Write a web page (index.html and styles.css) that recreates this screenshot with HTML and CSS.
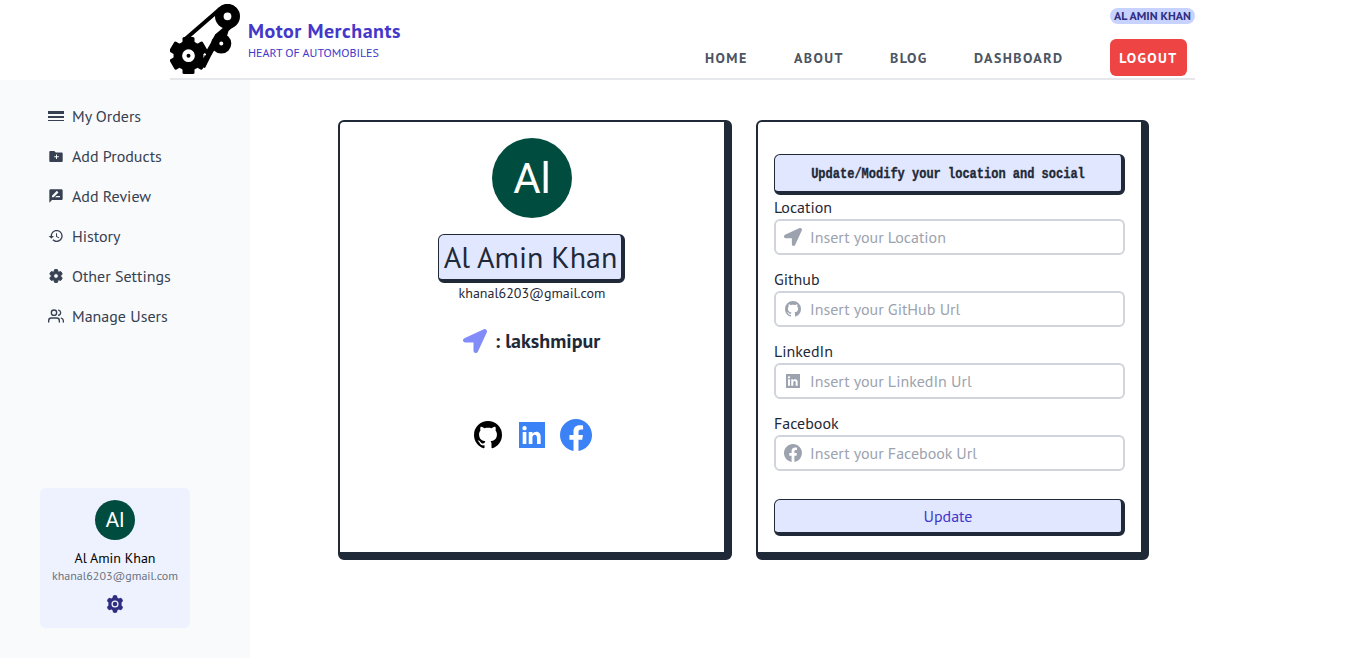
FILE: index.html
```html
<!DOCTYPE html>
<html lang="en">
<head>
<meta charset="utf-8">
<title>Motor Merchants</title>
<link rel="stylesheet" href="styles.css">
</head>
<body>
<svg class="defs" width="0" height="0">
  <symbol id="arrow" viewBox="0 0 512 512"><path d="M444.52 3.52L28.74 195.42c-47.97 22.39-31.98 92.75 19.19 92.75h175.91v175.91c0 51.17 70.36 67.17 92.75 19.19l191.9-415.78c15.99-38.39-25.59-79.97-63.97-63.97z"/></symbol>
  <symbol id="github" viewBox="2 2 20 20"><path d="M12 2A10 10 0 0 0 2 12c0 4.42 2.87 8.17 6.84 9.5.5.08.66-.23.66-.5v-1.69c-2.77.6-3.36-1.34-3.36-1.34-.46-1.16-1.11-1.47-1.11-1.47-.91-.62.07-.6.07-.6 1 .07 1.53 1.03 1.53 1.03.87 1.52 2.34 1.07 2.91.83.09-.65.35-1.09.63-1.34-2.22-.25-4.55-1.11-4.55-4.92 0-1.11.38-2 1.03-2.71-.1-.25-.45-1.29.1-2.64 0 0 .84-.27 2.75 1.02.79-.22 1.65-.33 2.5-.33.85 0 1.71.11 2.5.33 1.91-1.29 2.75-1.02 2.75-1.02.55 1.35.2 2.39.1 2.64.65.71 1.03 1.6 1.03 2.71 0 3.82-2.34 4.66-4.57 4.91.36.31.69.92.69 1.85V21c0 .27.16.59.67.5C19.14 20.16 22 16.42 22 12A10 10 0 0 0 12 2z"/></symbol>
  <symbol id="linkedin" viewBox="0 0 24 24"><path fill-rule="evenodd" d="M0 0h24v24H0zM3.4 9.2v11h3.4v-11zM5.1 3.7a2 2 0 1 0 0 4 2 2 0 0 0 0-4zM9 9.2v11h3.4v-5.8c0-3.3 4.2-3.5 4.2 0v5.8h3.4v-6.7c0-5.5-5.8-5.4-7.6-2.6V9.2z"/></symbol>
  <symbol id="facebook" viewBox="2 2 20 20"><path d="M12 2.04C6.5 2.04 2 6.53 2 12.06C2 17.06 5.66 21.21 10.44 21.96V14.96H7.9V12.06H10.44V9.85C10.44 7.34 11.93 5.96 14.22 5.96C15.31 5.96 16.45 6.15 16.45 6.15V8.62H15.19C13.95 8.62 13.56 9.39 13.56 10.18V12.06H16.34L15.89 14.96H13.56V21.96A10 10 0 0 0 22 12.06C22 6.53 17.5 2.04 12 2.04Z"/></symbol>
</svg>

<header class="header">
  <div class="brand">
    <svg class="logo" viewBox="0 0 70 70">
      <path d="M16 34.500L50 5" fill="none" stroke="#000" stroke-width="4"/>
      <path d="M42.500 37L45 30.500L54 23L69 17.500L58.500 27L57 32Z"/>
      <path d="M43 35L35 49L32 63L35 64L41 52L45 45Z"/>
      <circle cx="57.500" cy="12.300" r="8.200" fill="none" stroke="#000" stroke-width="8.600"/>
      <circle cx="51.300" cy="39.600" r="6" fill="none" stroke="#000" stroke-width="8"/>
      <circle cx="18.500" cy="51.700" r="15"/>
      <g>
        <rect x="12.500" y="33" width="12" height="37" rx="1.500"/>
        <rect x="12.500" y="32.500" width="12" height="38" rx="1.500" transform="rotate(60 18.500 51.700)"/>
        <rect x="12.500" y="32.500" width="12" height="38" rx="1.500" transform="rotate(-60 18.500 51.700)"/>
      </g>
      <circle cx="18.500" cy="51.700" r="4.200" stroke="#fff" stroke-width="4.400"/>
      <circle cx="35" cy="50.500" r="1.100" fill="#fff"/>
    </svg>
    <div class="brand-text">
      <div class="brand-name">Motor Merchants</div>
      <div class="brand-tag">HEART OF AUTOMOBILES</div>
    </div>
  </div>
  <nav class="nav">
    <a class="nav-home">HOME</a>
    <a class="nav-about">ABOUT</a>
    <a class="nav-blog">BLOG</a>
    <a class="nav-dashboard">DASHBOARD</a>
    <div class="account">
      <span class="user-badge">AL AMIN KHAN</span>
      <button class="logout">LOGOUT</button>
    </div>
  </nav>
</header>

<div class="body">
  <aside class="sidebar">
    <ul class="menu">
      <li><svg viewBox="0 0 16 16"><path d="M0 3h16v3H0zM0 8h16v2H0zM0 12h16v1H0z"/></svg><span>My Orders</span></li>
      <li><svg viewBox="0 0 16 16"><path fill-rule="evenodd" d="M1.300 4q0-1 1-1h4l1.500 1.400h5.900q1 0 1 1v7.600q0 1-1 1H2.300q-1 0-1-1zM8 6.500v1.700H6.200v1H8v1.700h1V9.200h1.800v-1H9V6.500z"/></svg><span>Add Products</span></li>
      <li><svg viewBox="0 0 24 24"><path d="M20 2H4c-1.100 0-2 .9-2 2v18l4-4h14c1.100 0 2-.9 2-2V4c0-1.100-.9-2-2-2zM6 14v-2.470l6.880-6.880c.2-.2.510-.2.710 0l1.770 1.770c.2.200.2.510 0 .710L8.470 14H6zm12 0h-7.500l2-2H18v2z"/></svg><span>Add Review</span></li>
      <li><svg viewBox="0 0 24 24"><path d="M13 3c-4.970 0-9 4.030-9 9H1l3.890 3.890.07.14L9 12H6c0-3.870 3.130-7 7-7s7 3.130 7 7-3.130 7-7 7c-1.930 0-3.680-.79-4.940-2.060l-1.420 1.420C8.270 19.990 10.510 21 13 21c4.970 0 9-4.030 9-9s-4.030-9-9-9zm-1 5v5l4.280 2.540.72-1.210-3.500-2.080V8H12z"/></svg><span>History</span></li>
      <li><svg viewBox="0 0 24 24"><path d="M19.140 12.940c.04-.3.060-.61.060-.94s-.02-.64-.07-.94l2.030-1.580c.18-.14.23-.41.12-.61l-1.920-3.320c-.12-.22-.37-.29-.59-.22l-2.390.96c-.5-.38-1.030-.7-1.620-.94l-.36-2.540c-.04-.24-.24-.41-.48-.41h-3.840c-.24 0-.43.17-.47.41l-.36 2.540c-.59.24-1.130.57-1.620.94l-2.390-.96c-.22-.08-.47 0-.59.22L2.740 8.870c-.12.21-.08.47.12.61l2.030 1.580c-.05.3-.09.63-.09.940s.02.64.07.94l-2.030 1.580c-.18.14-.23.41-.12.61l1.920 3.320c.12.22.37.29.59.22l2.390-.96c.5.38 1.030.7 1.620.94l.36 2.540c.05.24.24.41.48.41h3.840c.24 0 .44-.17.47-.41l.36-2.540c.59-.24 1.130-.56 1.620-.94l2.390.96c.22.080.47 0 .59-.22l1.920-3.320c.12-.22.070-.47-.12-.61l-2.010-1.580zM12 15.600A3.600 3.600 0 1 1 12 8.400a3.600 3.600 0 0 1 0 7.200z" stroke="#374151" stroke-width="1.500"/></svg><span>Other Settings</span></li>
      <li><svg class="line" viewBox="0 0 24 24"><path d="M17 21v-2a4 4 0 0 0-4-4H5a4 4 0 0 0-4 4v2M23 21v-2a4 4 0 0 0-3-3.870M16 3.130a4 4 0 0 1 0 7.750"/><circle cx="9" cy="7" r="4"/></svg><span>Manage Users</span></li>
    </ul>
    <div class="user-card">
      <div class="avatar avatar-small">Al</div>
      <div class="user-name">Al Amin Khan</div>
      <div class="user-mail">khanal6203@gmail.com</div>
      <svg class="user-gear" viewBox="0 0 18 18"><path d="M7 .8q2-1.400 4 0l.5 1.900 1.200.7 2-.6q2 .9 2.300 3.200L15.600 7.500v3l1.400 1.500q-.3 2.300-2.300 3.200l-2-.6-1.200.7-.5 1.900q-2 1.400-4 0l-.5-1.900-1.200-.7-2 .6Q1.300 14.300 1 12l1.400-1.500v-3L1 6q.3-2.300 2.300-3.200l2 .6 1.200-.7z"/><circle cx="9" cy="9" r="2.900" fill="none" stroke="#eef2ff" stroke-width="1.300"/></svg>
    </div>
  </aside>

  <main class="main">
    <section class="card profile">
      <div class="avatar avatar-large">Al</div>
      <h1 class="profile-name">Al Amin Khan</h1>
      <div class="profile-mail">khanal6203@gmail.com</div>
      <div class="place"><svg><use href="#arrow"/></svg><span>: lakshmipur</span></div>
      <div class="socials">
        <svg class="s-github"><use href="#github"/></svg>
        <svg class="s-linkedin"><use href="#linkedin"/></svg>
        <svg class="s-facebook"><use href="#facebook"/></svg>
      </div>
    </section>

    <form class="card form">
      <div class="form-title"><span>Update/Modify your location and social</span></div>
      <label>Location</label>
      <div class="field"><svg><use href="#arrow"/></svg><input placeholder="Insert your Location"></div>
      <label>Github</label>
      <div class="field"><svg class="sm"><use href="#github"/></svg><input placeholder="Insert your GitHub Url"></div>
      <label>LinkedIn</label>
      <div class="field"><svg class="xs"><use href="#linkedin"/></svg><input placeholder="Insert your LinkedIn Url"></div>
      <label>Facebook</label>
      <div class="field"><svg><use href="#facebook"/></svg><input placeholder="Insert your Facebook Url"></div>
      <button class="update" type="button">Update</button>
    </form>
  </main>
</div>
</body>
</html>
```
FILE: styles.css
```css
* { box-sizing: border-box; }
body {
  margin: 0;
  height: 658px;
  overflow: hidden;
  background: #fff;
  color: #1f2937;
  font-family: "PT Sans", "Noto Sans", sans-serif;
  font-size: 16px;
  line-height: 24px;
}
svg { display: block; flex: none; fill: currentColor; }
.defs { position: absolute; }
button, input { font: inherit; }

.header {
  display: flex;
  justify-content: space-between;
  width: 1025px;
  height: 80px;
  margin-left: 170px;
  border-bottom: 2px solid #e5e7eb;
}
.brand { display: flex; gap: 8px; padding-top: 4px; color: #4338ca; }
.logo { width: 70px; height: 70px; color: #000; }
.brand-text { padding-top: 13px; white-space: nowrap; }
.brand-name { font-size: 20px; font-weight: 700; line-height: 28px; letter-spacing: 0.5px; }
.brand-tag { font-size: 12px; line-height: 16px; }

.nav { display: flex; padding-top: 8px; font-size: 14px; font-weight: 700; color: #4b5563; white-space: nowrap; letter-spacing: 1.4px; }
.nav a { padding-top: 38px; }
.nav-home { width: 89px; }
.nav-about { width: 96px; }
.nav-blog { width: 84px; }
.nav-dashboard { width: 136px; }
.account { display: flex; flex-direction: column; align-items: flex-start; width: 85px; }
.user-badge {
  width: 85px;
  height: 16px;
  border-radius: 8px;
  background: #c7d2fe;
  color: #312e81;
  font-size: 12px;
  line-height: 16px;
  letter-spacing: 0;
  text-align: center;
}
.logout {
  width: 77px;
  height: 37px;
  margin-top: 15px;
  padding: 0;
  border: 0;
  border-radius: 6px;
  background: #ef4444;
  color: #fff;
  font-weight: 700;
  letter-spacing: 1.4px;
}

.body { display: flex; height: 578px; }
.sidebar {
  display: flex;
  flex-direction: column;
  justify-content: space-between;
  width: 250px;
  padding: 16px 40px 30px;
  background: #f8fafc;
}
.menu { margin: 0; padding: 0 0 0 8px; list-style: none; color: #374151; }
.menu li { display: flex; align-items: center; gap: 8px; height: 40px; white-space: nowrap; }
.menu svg { width: 16px; height: 16px; }
.menu .line { fill: none; stroke: currentColor; stroke-width: 2; stroke-linecap: round; stroke-linejoin: round; }
.user-card {
  display: flex;
  flex-direction: column;
  align-items: center;
  width: 150px;
  height: 140px;
  padding-top: 12px;
  border-radius: 6px;
  background: #eef2ff;
}
.avatar {
  border-radius: 50%;
  background: #004d40;
  color: #fff;
  font-family: Roboto, sans-serif;
  text-align: center;
}
.avatar-small { width: 40px; height: 40px; font-size: 21px; line-height: 41px; }
.avatar-large { width: 80px; height: 80px; font-size: 42px; line-height: 82px; }
.user-name { margin-top: 8px; color: #000; font-size: 14px; line-height: 20px; }
.user-mail { color: #6b7280; font-size: 12px; line-height: 16px; }
.user-gear { width: 18px; height: 18px; margin-top: 11px; color: #312e81; }

.main { display: flex; gap: 24px; padding: 40px 0 0 88px; }
.card {
  display: flex;
  flex-direction: column;
  height: 440px;
  border: 2px solid #1f2937;
  border-right-width: 8px;
  border-bottom-width: 8px;
  border-radius: 6px;
}
.profile { align-items: center; width: 394px; padding-top: 16px; }
.profile-name {
  width: 187px;
  height: 49px;
  margin: 16px 1px 0 0;
  padding-left: 1px;
  border: 1px solid #1f2937;
  border-right-width: 4px;
  border-bottom-width: 4px;
  border-radius: 6px;
  background: #e0e7ff;
  font-size: 30px;
  font-weight: 400;
  line-height: 44px;
  text-align: center;
  white-space: nowrap;
}
.profile-mail { font-size: 14px; line-height: 20px; }
.place { display: flex; align-items: center; gap: 8px; height: 28px; margin: 24px 1px 0 0; font-size: 20px; font-weight: 700; line-height: 28px; }
.place svg { width: 24px; height: 24px; color: #818cf8; }
.socials { display: flex; align-items: center; height: 32px; margin-top: 64px; padding-left: 2px; color: #3b82f6; }
.s-github { width: 28px; height: 28px; color: #000; }
.s-linkedin { width: 26px; height: 26px; margin: 0 15px 0 17px; }
.s-facebook { width: 32px; height: 32px; }

.form { width: 393px; padding: 32px 16px 0; }
.form-title {
  height: 41px;
  border: 1px solid #1f2937;
  border-right-width: 4px;
  border-bottom-width: 4px;
  border-radius: 6px;
  background: #e0e7ff;
  font-family: "Liberation Mono", monospace;
  font-size: 12px;
  font-weight: 700;
  line-height: 38px;
  text-align: center;
  white-space: nowrap;
}
.form-title span { display: inline-block; transform: scaleY(1.25); -webkit-text-stroke: 0.3px currentColor; }
.form label { height: 24px; line-height: 24px; }
.field {
  display: flex;
  align-items: center;
  height: 36px;
  margin-bottom: 12px;
  padding-left: 8px;
  border: 2px solid #d1d5db;
  border-radius: 6px;
  color: #9ca3af;
}
.field svg { width: 18px; height: 18px; }
.field .sm { width: 16px; height: 16px; margin: 0 1px; }
.field .xs { width: 14px; height: 14px; margin: 0 2px; }
.field input { flex: 1; min-width: 0; margin-left: 8px; padding: 0; border: 0; outline: 0; background: none; }
.field input::placeholder { color: #9ca3af; }
.update {
  height: 37px;
  margin-top: 16px;
  border: 1px solid #1f2937;
  border-right-width: 4px;
  border-bottom-width: 4px;
  border-radius: 6px;
  background: #e0e7ff;
  color: #4338ca;
}
```
